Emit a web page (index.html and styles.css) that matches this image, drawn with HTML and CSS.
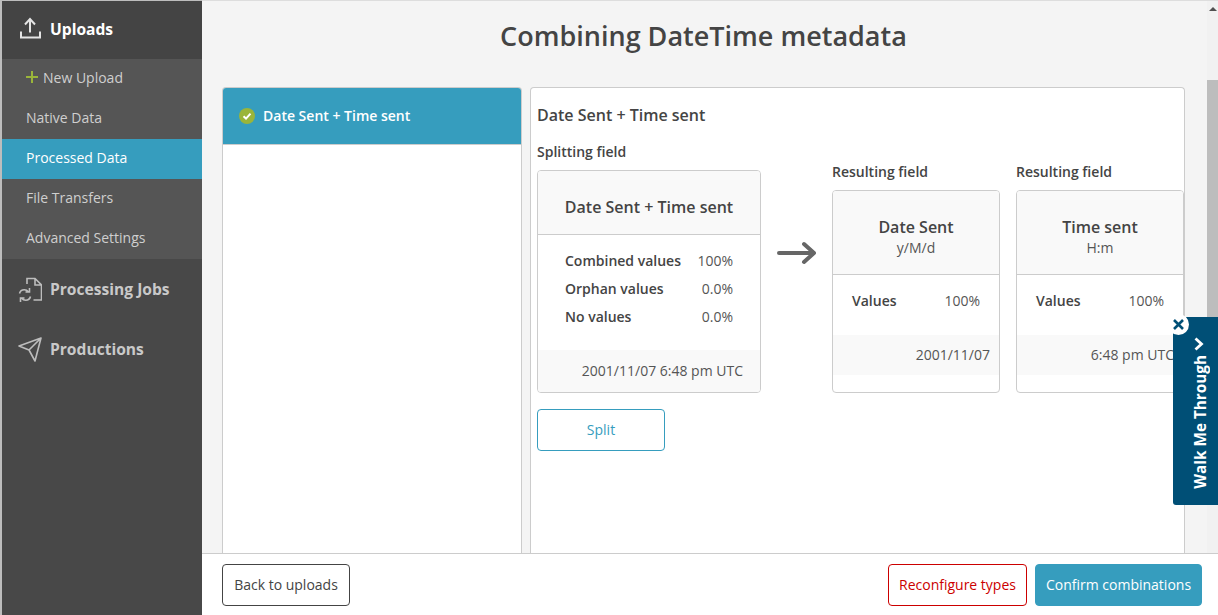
FILE: index.html
```html
<!DOCTYPE html>
<html lang="en">
<head>
<meta charset="utf-8">
<title>Combining DateTime metadata</title>
<link rel="stylesheet" href="styles.css">
</head>
<body>
<div class="app">
  <nav class="sidebar">
    <div class="nav-head nav-head-active">
      <svg class="nav-icon" width="24" height="24" viewBox="0 0 24 24" fill="none" stroke="#e4e4e4" stroke-width="2"><path d="M3 14.500V20.500H22V14.500M12 15.500V2M7 7.500 12 2l5 5.500"/></svg>
      <span>Uploads</span>
    </div>
    <ul class="subnav">
      <li class="subnav-item"><svg class="plus" width="12" height="12" viewBox="0 0 12 12" fill="none" stroke="#9ab53a" stroke-width="2"><path d="M6 0v12M0 6h12"/></svg>New Upload</li>
      <li class="subnav-item">Native Data</li>
      <li class="subnav-item subnav-active">Processed Data</li>
      <li class="subnav-item">File Transfers</li>
      <li class="subnav-item">Advanced Settings</li>
    </ul>
    <div class="nav-head">
      <svg class="nav-icon" width="24" height="26" viewBox="0 0 24 26" fill="none" stroke="#bdbdbd" stroke-width="1.600"><path d="M9 8V2.500h8l6.500 6.500v15H15.500M17 2.500V9h6.500"/><path d="M1.500 17.500c.6-2.400 2.700-3.700 4.800-3.700 1.700 0 3.100.8 4 2M11.500 12v4H7.500M12.500 20.500c-.6 2.400-2.700 3.700-4.800 3.700-1.700 0-3.100-.8-4-2M2.500 26v-4h4"/></svg>
      <span>Processing Jobs</span>
    </div>
    <div class="nav-head">
      <svg class="nav-icon" width="24" height="26" viewBox="0 0 24 26" fill="none" stroke="#bdbdbd" stroke-width="1.600" stroke-linejoin="round"><path d="M23 2 1 10l10 4 6 11L23 2ZM23 2 11 14"/></svg>
      <span>Productions</span>
    </div>
  </nav>
  <main class="main">
    <div class="scroll-area">
      <div class="content">
        <h1 class="title">Combining DateTime metadata</h1>
        <div class="panels">
          <section class="list-panel">
            <div class="list-item">
              <svg class="check" width="16" height="16" viewBox="0 0 16 16"><circle cx="8" cy="8" r="8" fill="#9ab53a"/><path d="M4.500 8.300 7 10.600l4.500-5" fill="none" stroke="#fff" stroke-width="2"/></svg>
              <span class="list-label">Date Sent + Time sent</span>
            </div>
          </section>
          <section class="detail-panel">
            <h2 class="detail-title">Date Sent + Time sent</h2>
            <div class="fields">
              <div class="split-col">
                <h3 class="field-label">Splitting field</h3>
                <div class="card">
                  <div class="card-head card-head-split">Date Sent + Time sent</div>
                  <dl class="stats">
                    <div class="stat"><dt>Combined values</dt><dd>100%</dd></div>
                    <div class="stat"><dt>Orphan values</dt><dd>0.0%</dd></div>
                    <div class="stat"><dt>No values</dt><dd>0.0%</dd></div>
                  </dl>
                  <div class="card-foot card-foot-split">2001/11/07 6:48 pm UTC</div>
                </div>
                <button class="btn btn-split">Split</button>
              </div>
              <div class="arrow-col">
                <svg width="40" height="24" viewBox="0 0 40 24" fill="none" stroke="#666" stroke-width="4" stroke-linecap="round" stroke-linejoin="round"><path d="M2 12h35M27 3l10 9-10 9"/></svg>
              </div>
              <div class="result-col">
                <h3 class="field-label">Resulting field</h3>
                <div class="card">
                  <div class="card-head card-head-result">Date Sent<small>y/M/d</small></div>
                  <dl class="stats stats-result">
                    <div class="stat"><dt>Values</dt><dd>100%</dd></div>
                  </dl>
                  <div class="card-foot card-foot-result">2001/11/07</div>
                </div>
              </div>
              <div class="result-col">
                <h3 class="field-label">Resulting field</h3>
                <div class="card">
                  <div class="card-head card-head-result">Time sent<small>H:m</small></div>
                  <dl class="stats stats-result">
                    <div class="stat"><dt>Values</dt><dd>100%</dd></div>
                  </dl>
                  <div class="card-foot card-foot-result">6:48 pm UTC</div>
                </div>
              </div>
            </div>
          </section>
        </div>
      </div>
      <div class="scrollbar">
        <div class="scroll-arrow"></div>
        <div class="scroll-thumb"></div>
      </div>
    </div>
    <footer class="footer">
      <button class="btn btn-back">Back to uploads</button>
      <div class="footer-right">
        <button class="btn btn-danger">Reconfigure types</button>
        <button class="btn btn-primary">Confirm combinations</button>
      </div>
    </footer>
  </main>
</div>
<aside class="walkme">
  <svg class="walkme-chevron" width="10" height="14" viewBox="0 0 10 14" fill="none" stroke="#fff" stroke-width="2.800"><path d="M1.500 1.500 7.500 7l-6 5.500"/></svg>
  <span class="walkme-text">Walk Me Through</span>
  <span class="walkme-close"><svg width="11" height="11" viewBox="0 0 11 11" fill="none" stroke="#004f76" stroke-width="2.600"><path d="M1 1l9 9M10 1 1 10"/></svg></span>
</aside>
</body>
</html>
```

FILE: styles.css
```css
* { box-sizing: border-box; }
html, body { margin: 0; height: 100%; overflow: hidden; }
body { font-family: "Open Sans", sans-serif; color: #444; background: #f4f4f4; }
h1, h2, h3, ul, dl, dd { margin: 0; padding: 0; }
ul { list-style: none; }

.app { display: flex; height: 615px; padding-left: 2px; background: #bdbdbd; }

.sidebar { width: 200px; flex: none; background: #484848; border-top: 1px solid #bdbdbd; }
.nav-head { display: flex; align-items: center; gap: 8px; height: 60px; padding-left: 16px; font-size: 15.6px; font-weight: 700; color: #c9c9c9; }
.nav-head-active { height: 58px; padding-bottom: 2px; background: #444; color: #fff; }
.nav-icon { flex: none; }
.subnav { background: #555; }
.subnav-item { display: flex; align-items: center; height: 40px; padding: 0 0 4px 24px; font-size: 14px; color: #cfcfcf; }
.subnav-active { background: #369dbe; color: #fff; }
.plus { flex: none; margin: 0 5px 0 0; }

.main { flex: 1; min-width: 0; display: flex; flex-direction: column; background: #f4f4f4; }
.scroll-area { flex: 1; min-height: 0; display: flex; overflow: hidden; border-top: 1px solid #ddd; }
.content { flex: 1; min-width: 0; padding: 0 22px 0 20px; display: flex; flex-direction: column; }
.title { height: 86px; padding-top: 15px; text-align: center; font-size: 27px; line-height: 40px; font-weight: 600; color: #444; }
.panels { flex: 1; display: flex; gap: 8px; min-height: 0; }
.list-panel { width: 300px; flex: none; background: #fff; border: 1px solid #ccc; border-bottom: 0; border-radius: 4px 4px 0 0; overflow: hidden; }
.list-item { display: flex; align-items: center; gap: 8px; height: 57px; padding-left: 16px; background: #369dbe; color: #fff; font-size: 14px; font-weight: 600; border-bottom: 1px solid #ccc; }
.list-label { padding-bottom: 2px; }
.check { flex: none; }
.detail-panel { flex: 1; min-width: 0; background: #fff; border: 1px solid #ccc; border-bottom: 0; border-radius: 4px 4px 0 0; padding: 0 0 0 6px; }
.detail-title { height: 54px; padding-top: 15px; font-size: 16px; line-height: 24px; font-weight: 600; color: #444; }
.fields { display: flex; align-items: flex-start; }
.split-col { width: 224px; flex: none; }
.field-label { height: 28px; font-size: 14px; line-height: 20px; font-weight: 600; color: #444; }
.card { background: #fff; border: 1px solid #ccc; border-radius: 4px; overflow: hidden; }
.card-head { background: #f9f9f9; border-bottom: 1px solid #ccc; text-align: center; font-size: 16px; font-weight: 600; color: #444; }
.card-head small { display: block; font-size: 14px; font-weight: 400; line-height: 17px; color: #555; }
.card-head-split { height: 64px; line-height: 72px; }
.card-head-result { height: 84px; padding-top: 24px; line-height: 24px; }
.stats { padding: 12px 27px 0; height: 115px; font-size: 14px; }
.stat { display: flex; justify-content: space-between; height: 28px; line-height: 28px; }
.stat dt { font-weight: 600; color: #444; }
.stat dd { color: #555; }
.stats-result { height: 60px; padding: 12px 19px 0; }
.card-foot { background: #f9f9f9; font-size: 14px; color: #555; text-align: right; white-space: nowrap; }
.card-foot-split { height: 42px; line-height: 41px; padding-right: 17px; }
.card-foot-result { height: 40px; line-height: 40px; padding-right: 9px; margin-bottom: 17px; }
.arrow-col { width: 71px; flex: none; height: 24px; margin-top: 99px; padding-left: 16px; display: flex; }
.result-col { width: 168px; flex: none; margin-top: 20px; }
.result-col + .result-col { margin-left: 16px; }

.btn { font-family: inherit; font-size: 14px; height: 42px; border-radius: 4px; background: #fff; border: 1px solid #444; color: #444; padding: 0; }
.btn-split { display: block; width: 128px; margin-top: 16px; padding-bottom: 2px; border-color: #369dbe; color: #369dbe; }
.btn-back { width: 128px; }
.btn-danger { width: 139px; border-color: #c00; color: #c00; }
.btn-primary { width: 167px; background: #369dbe; border-color: #369dbe; color: #fff; }

.scrollbar { width: 11px; flex: none; background: #f1f1f1; }
.scroll-arrow { height: 79px; position: relative; }
.scroll-arrow::before { content: ""; position: absolute; top: 6px; left: 2px; border: 4px solid transparent; border-top: 0; border-bottom: 4px solid #505050; }
.scroll-thumb { height: 300px; background: #bdbdbd; }

.footer { height: 62px; flex: none; display: flex; justify-content: space-between; align-items: center; padding: 0 16px 0 20px; background: #fff; border-top: 1px solid #ccc; }
.footer-right { display: flex; gap: 8px; }

.walkme { position: absolute; left: 1173px; top: 317px; width: 45px; height: 188px; background: #004f76; border-radius: 3px 0 0 3px; display: flex; flex-direction: column; align-items: flex-start; justify-content: flex-end; gap: 4px; padding: 0 0 16px 16px; }
.walkme-chevron { flex: none; margin-left: 5px; }
.walkme-text { writing-mode: vertical-rl; transform: rotate(180deg); font-size: 15.3px; font-weight: 700; color: #fff; white-space: nowrap; line-height: 22px; }
.walkme-close { position: absolute; left: -5px; top: -3px; width: 21px; height: 21px; border-radius: 50%; background: #fff; display: flex; align-items: center; justify-content: center; }
```
